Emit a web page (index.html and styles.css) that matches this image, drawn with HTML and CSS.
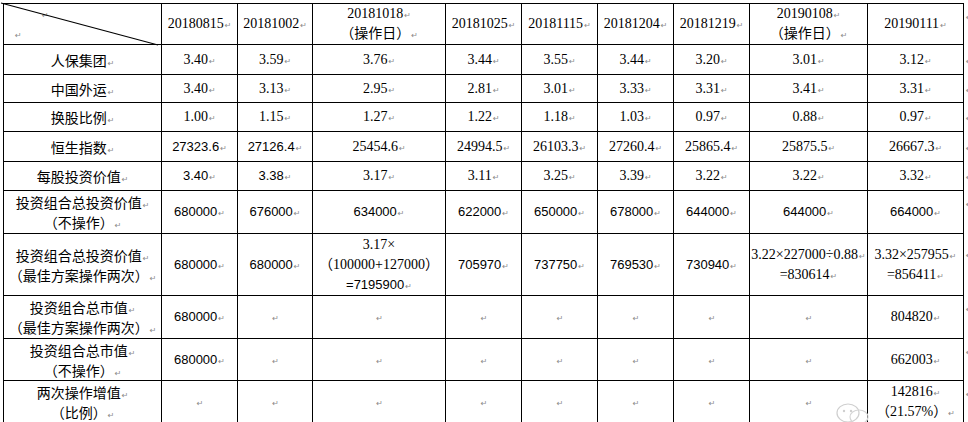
FILE: index.html
```html
<!DOCTYPE html>
<html lang="zh">
<head>
<meta charset="utf-8">
<title>换股比例表</title>
<link rel="stylesheet" href="styles.css">
</head>
<body>
<div class="page">
<table class="grid">
  <colgroup>
    <col class="c-label"><col class="c-n"><col class="c-n2"><col class="c-w1"><col class="c-n"><col class="c-n"><col class="c-n"><col class="c-n"><col class="c-w2"><col class="c-w3"><col class="c-eor">
  </colgroup>
  <tr class="h41">
    <td class="corner">
      <svg class="diag" width="160" height="44" viewBox="0 0 160 44"><line x1="0" y1="0" x2="157" y2="42" stroke="#000" stroke-width="1.2"/></svg>
      <div class="cm1"><span class="pm">↵</span></div>
      <div class="cm2"><span class="pm">↵</span></div>
    </td>
    <td class="s">20180815<span class="pm">↵</span></td>
    <td class="s">20181002<span class="pm">↵</span></td>
    <td class="s">20181018<span class="pm">↵</span><br><span class="zi">（操作日）</span><span class="pm">↵</span></td>
    <td class="s">20181025<span class="pm">↵</span></td>
    <td class="s">20181115<span class="pm">↵</span></td>
    <td class="s">20181204<span class="pm">↵</span></td>
    <td class="s">20181219<span class="pm">↵</span></td>
    <td class="s">20190108<span class="pm">↵</span><br><span class="zi">（操作日）</span><span class="pm">↵</span></td>
    <td class="s">20190111<span class="pm">↵</span></td>
    <td class="eor top"><span class="pm">↵</span></td>
  </tr>
  <tr class="h30">
    <td class="zh">人保集团<span class="pm">↵</span></td>
    <td class="s">3.40<span class="pm">↵</span></td>
    <td class="s">3.59<span class="pm">↵</span></td>
    <td class="s">3.76<span class="pm">↵</span></td>
    <td class="s">3.44<span class="pm">↵</span></td>
    <td class="s">3.55<span class="pm">↵</span></td>
    <td class="s">3.44<span class="pm">↵</span></td>
    <td class="s">3.20<span class="pm">↵</span></td>
    <td class="s">3.01<span class="pm">↵</span></td>
    <td class="s">3.12<span class="pm">↵</span></td>
    <td class="eor"><span class="pm">↵</span></td>
  </tr>
  <tr class="h28">
    <td class="zh">中国外运<span class="pm">↵</span></td>
    <td class="s">3.40<span class="pm">↵</span></td>
    <td class="s">3.13<span class="pm">↵</span></td>
    <td class="s">2.95<span class="pm">↵</span></td>
    <td class="s">2.81<span class="pm">↵</span></td>
    <td class="s">3.01<span class="pm">↵</span></td>
    <td class="s">3.33<span class="pm">↵</span></td>
    <td class="s">3.31<span class="pm">↵</span></td>
    <td class="s">3.41<span class="pm">↵</span></td>
    <td class="s">3.31<span class="pm">↵</span></td>
    <td class="eor"><span class="pm">↵</span></td>
  </tr>
  <tr class="h29">
    <td class="zh">换股比例<span class="pm">↵</span></td>
    <td class="s">1.00<span class="pm">↵</span></td>
    <td class="s">1.15<span class="pm">↵</span></td>
    <td class="s">1.27<span class="pm">↵</span></td>
    <td class="s">1.22<span class="pm">↵</span></td>
    <td class="s">1.18<span class="pm">↵</span></td>
    <td class="s">1.03<span class="pm">↵</span></td>
    <td class="s">0.97<span class="pm">↵</span></td>
    <td class="s">0.88<span class="pm">↵</span></td>
    <td class="s">0.97<span class="pm">↵</span></td>
    <td class="eor"><span class="pm">↵</span></td>
  </tr>
  <tr class="h30">
    <td class="zh">恒生指数<span class="pm">↵</span></td>
    <td class="a">27323.6<span class="pm">↵</span></td>
    <td class="a">27126.4<span class="pm">↵</span></td>
    <td class="s">25454.6<span class="pm">↵</span></td>
    <td class="s">24994.5<span class="pm">↵</span></td>
    <td class="s">26103.3<span class="pm">↵</span></td>
    <td class="s">27260.4<span class="pm">↵</span></td>
    <td class="s">25865.4<span class="pm">↵</span></td>
    <td class="s">25875.5<span class="pm">↵</span></td>
    <td class="s">26667.3<span class="pm">↵</span></td>
    <td class="eor"><span class="pm">↵</span></td>
  </tr>
  <tr class="h29">
    <td class="zh">每股投资价值<span class="pm">↵</span></td>
    <td class="a">3.40<span class="pm">↵</span></td>
    <td class="a">3.38<span class="pm">↵</span></td>
    <td class="s">3.17<span class="pm">↵</span></td>
    <td class="s">3.11<span class="pm">↵</span></td>
    <td class="s">3.25<span class="pm">↵</span></td>
    <td class="s">3.39<span class="pm">↵</span></td>
    <td class="s">3.22<span class="pm">↵</span></td>
    <td class="s">3.22<span class="pm">↵</span></td>
    <td class="s">3.32<span class="pm">↵</span></td>
    <td class="eor"><span class="pm">↵</span></td>
  </tr>
  <tr class="h43">
    <td class="zh">投资组合总投资价值<span class="pm">↵</span><br>（不操作）<span class="pm">↵</span></td>
    <td class="a">680000<span class="pm">↵</span></td>
    <td class="a">676000<span class="pm">↵</span></td>
    <td class="a">634000<span class="pm">↵</span></td>
    <td class="a">622000<span class="pm">↵</span></td>
    <td class="a">650000<span class="pm">↵</span></td>
    <td class="a">678000<span class="pm">↵</span></td>
    <td class="a">644000<span class="pm">↵</span></td>
    <td class="a">644000<span class="pm">↵</span></td>
    <td class="a">664000<span class="pm">↵</span></td>
    <td class="eor top"><span class="pm">↵</span></td>
  </tr>
  <tr class="h62">
    <td class="zh">投资组合总投资价值<span class="pm">↵</span><br>（最佳方案操作两次）<span class="pm">↵</span></td>
    <td class="a">680000<span class="pm">↵</span></td>
    <td class="a">680000<span class="pm">↵</span></td>
    <td class="s">3.17×<br><span class="zi">（</span>100000+127000<span class="zi">）</span><br><span class="ai">=7195900</span><span class="pm">↵</span></td>
    <td class="a">705970<span class="pm">↵</span></td>
    <td class="a">737750<span class="pm">↵</span></td>
    <td class="a">769530<span class="pm">↵</span></td>
    <td class="a">730940<span class="pm">↵</span></td>
    <td class="s">3.22×227000÷0.88<span class="pm">↵</span><br>=830614<span class="pm">↵</span></td>
    <td class="s">3.32×257955<span class="pm">↵</span><br>=856411<span class="pm">↵</span></td>
    <td class="eor top2"><span class="pm">↵</span></td>
  </tr>
  <tr class="h43">
    <td class="zh">投资组合总市值<span class="pm">↵</span><br>（最佳方案操作两次）<span class="pm">↵</span></td>
    <td class="a">680000<span class="pm">↵</span></td>
    <td><span class="pm">↵</span></td>
    <td><span class="pm">↵</span></td>
    <td><span class="pm">↵</span></td>
    <td><span class="pm">↵</span></td>
    <td><span class="pm">↵</span></td>
    <td><span class="pm">↵</span></td>
    <td><span class="pm">↵</span></td>
    <td class="s">804820<span class="pm">↵</span></td>
    <td class="eor top"><span class="pm">↵</span></td>
  </tr>
  <tr class="h42">
    <td class="zh">投资组合总市值<span class="pm">↵</span><br>（不操作）<span class="pm">↵</span></td>
    <td class="a">680000<span class="pm">↵</span></td>
    <td><span class="pm">↵</span></td>
    <td><span class="pm">↵</span></td>
    <td><span class="pm">↵</span></td>
    <td><span class="pm">↵</span></td>
    <td><span class="pm">↵</span></td>
    <td><span class="pm">↵</span></td>
    <td><span class="pm">↵</span></td>
    <td class="s">662003<span class="pm">↵</span></td>
    <td class="eor top"><span class="pm">↵</span></td>
  </tr>
  <tr class="h43">
    <td class="zh">两次操作增值<span class="pm">↵</span><br>（比例）<span class="pm">↵</span></td>
    <td><span class="pm">↵</span></td>
    <td><span class="pm">↵</span></td>
    <td><span class="pm">↵</span></td>
    <td><span class="pm">↵</span></td>
    <td><span class="pm">↵</span></td>
    <td><span class="pm">↵</span></td>
    <td><span class="pm">↵</span></td>
    <td><span class="pm">↵</span></td>
    <td class="s">142816<span class="pm">↵</span><br><span class="zi">（</span>21.57%<span class="zi">）</span><span class="pm">↵</span></td>
    <td class="eor top"><span class="pm">↵</span></td>
  </tr>
</table>
<div class="watermark" aria-hidden="true">
  <svg width="40" height="26" viewBox="0 0 40 26">
    <ellipse cx="14" cy="13" rx="11" ry="9" fill="none" stroke="#cfcfcf" stroke-width="1.2"/>
    <ellipse cx="25" cy="17" rx="9" ry="7" fill="none" stroke="#d6d6d6" stroke-width="1.2"/>
    <circle cx="10" cy="11" r="1.2" fill="#cfcfcf"/>
    <circle cx="17" cy="11" r="1.2" fill="#cfcfcf"/>
  </svg>
</div>
</div>
</body>
</html>
```
FILE: styles.css
```css
html, body {
  margin: 0;
  padding: 0;
  background: #fff;
}
body {
  width: 968px;
  height: 422px;
  overflow: hidden;
}
.page {
  position: relative;
  width: 968px;
  height: 422px;
  padding: 3px 0 0 3px;
  box-sizing: border-box;
}
.grid {
  border-collapse: collapse;
  table-layout: fixed;
  width: 966px;
  color: #000;
  font-family: "Liberation Serif", "Noto Sans CJK SC", serif;
  font-size: 14px;
  line-height: 20px;
  text-spacing-trim: space-all;
}
.c-label { width: 158px; }
.c-n { width: 76px; }
.c-n2 { width: 75px; }
.c-w1 { width: 133px; }
.c-w2 { width: 118px; }
.c-w3 { width: 96px; }
.c-eor { width: 6px; }

.grid td {
  border: 1px solid #000;
  padding: 0;
  text-align: center;
  vertical-align: middle;
  white-space: nowrap;
  overflow: hidden;
}
.grid td.eor {
  border: none;
  text-align: left;
  padding-left: 1px;
  overflow: visible;
}
.grid td.top { vertical-align: top; padding-top: 2px; }
.grid td.top2 { vertical-align: top; padding-top: 10px; }

.h41 { height: 41px; }
.h30 { height: 30px; }
.h29 { height: 29px; }
.h28 { height: 28px; }
.h43 { height: 43px; }
.h42 { height: 42px; }
.h62 { height: 62px; }

.s { font-family: "Liberation Serif", "Noto Sans CJK SC", serif; }
.a { font-family: "Liberation Sans", "Noto Sans CJK SC", sans-serif; font-size: 13px; }
.ai { font-family: "Liberation Sans", sans-serif; font-size: 13px; line-height: 1; }
.zh { font-family: "Noto Sans CJK SC", "Liberation Sans", sans-serif; font-size: 14px; }
.zi { font-family: "Noto Sans CJK SC", sans-serif; line-height: 1; }

.pm {
  font-family: "DejaVu Sans", sans-serif;
  font-size: 8px;
  line-height: 1;
  color: #8a8a8a;
  margin-left: 1px;
}

.grid td.corner {
  position: relative;
  text-align: left;
  overflow: visible;
  line-height: 20px;
}
.diag {
  position: absolute;
  left: -3px;
  top: -1px;
  overflow: visible;
}
.cm1 { padding-left: 37px; }
.cm2 { padding-left: 10px; }

.watermark {
  position: absolute;
  left: 834px;
  top: 400px;
}
```
